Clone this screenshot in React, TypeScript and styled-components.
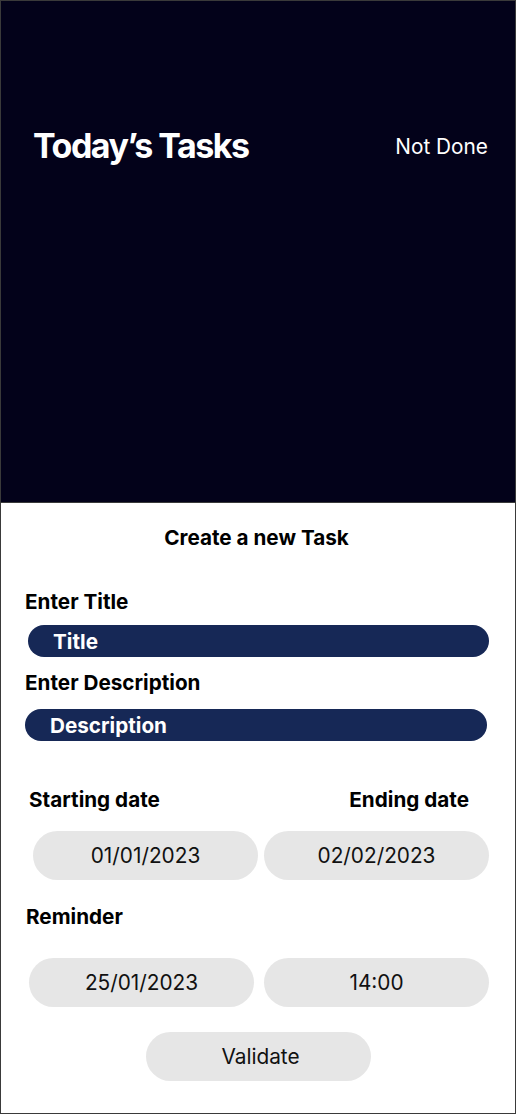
import React from "react";
import styled, { createGlobalStyle } from "styled-components";

const GlobalStyle = createGlobalStyle`
  html, body { margin: 0; padding: 0; background: #ffffff; }
  body { font-family: Inter, "Noto Sans", sans-serif; }
  * { box-sizing: border-box; }
`;

const Frame = styled.div`
  width: 516px;
  height: 1114px;
  border: 1px solid #3a3a3a;
  display: flex;
  flex-direction: column;
  overflow: hidden;
`;

const Header = styled.header`
  height: 501px;
  background: #03021a;
  display: flex;
  justify-content: space-between;
  align-items: flex-start;
  padding: 125px 27px 0 32px;
  flex-shrink: 0;
`;

const HeaderTitle = styled.h1`
  margin: 0;
  color: #ffffff;
  font-family: Inter, sans-serif;
  font-weight: 700;
  font-size: 34px;
  letter-spacing: -1.5px;
  line-height: 40px;
`;

const Status = styled.span`
  color: #ffffff;
  font-family: Inter, sans-serif;
  font-weight: 400;
  font-size: 20.8px;
  line-height: 40px;
  padding-top: 1px;
`;

const Panel = styled.section`
  flex: 1;
  background: #ffffff;
  border-top: 1px solid #3a3a3a;
  display: flex;
  flex-direction: column;
  padding: 21px 26px 0 23px;
`;

const PanelTitle = styled.h2`
  margin: 0 0 37px;
  text-align: center;
  font-family: Inter, sans-serif;
  font-weight: 700;
  font-size: 20.7px;
  line-height: 28px;
  color: #000;
`;

const Label = styled.div<{ $indent?: number }>`
  font-family: Inter, sans-serif;
  font-weight: 700;
  font-size: 20.7px;
  line-height: 26px;
  color: #000;
  padding-left: ${(p) => p.$indent ?? 1}px;
`;

const DarkInput = styled.div<{ $left: number; $right: number; $textLeft: number }>`
  height: 32px;
  border-radius: 16px;
  background: #162856;
  color: #ffffff;
  font-family: Inter, sans-serif;
  font-weight: 700;
  font-size: 20.7px;
  display: flex;
  align-items: center;
  margin-left: ${(p) => p.$left}px;
  margin-right: ${(p) => p.$right}px;
  padding-left: ${(p) => p.$textLeft}px;
`;

const Gap = styled.div<{ $h: number }>`
  height: ${(p) => p.$h}px;
  flex-shrink: 0;
`;

const DateLabels = styled.div`
  display: flex;
  justify-content: space-between;
  padding: 0 20px 0 5px;
  margin-top: 46px;
`;

const PillRow = styled.div<{ $left: number; $top: number }>`
  display: grid;
  grid-template-columns: 225px 225px;
  column-gap: ${(p) => 264 - p.$left - 225}px;
  padding-left: ${(p) => p.$left - 24}px;
  margin-top: ${(p) => p.$top}px;
`;

const Pill = styled.div`
  height: 49px;
  border-radius: 25px;
  background: #e6e6e6;
  display: flex;
  align-items: center;
  justify-content: center;
  font-family: Inter, sans-serif;
  font-weight: 400;
  font-size: 20.8px;
  color: #111;
`;

const ReminderLabel = styled(Label)`
  margin-top: 24px;
`;

const ButtonRow = styled.div`
  display: flex;
  justify-content: center;
  margin-top: 25px;
  padding-left: 4px;
`;

const ValidateButton = styled.button`
  width: 225px;
  height: 49px;
  border: none;
  border-radius: 25px;
  background: #e6e6e6;
  font-family: Inter, sans-serif;
  font-weight: 400;
  font-size: 20.8px;
  color: #111;
  padding: 0 0 0 4px;
  cursor: pointer;
`;

export default function App() {
  return (
    <>
      <GlobalStyle />
      <Frame>
        <Header>
          <HeaderTitle>Today’s Tasks</HeaderTitle>
          <Status>Not Done</Status>
        </Header>
        <Panel>
          <PanelTitle>Create a new Task</PanelTitle>
          <Label>Enter Title</Label>
          <Gap $h={10} />
          <DarkInput $left={4} $right={0} $textLeft={25}>Title</DarkInput>
          <Gap $h={13} />
          <Label>Enter Description</Label>
          <Gap $h={13} />
          <DarkInput $left={1} $right={2} $textLeft={25}>Description</DarkInput>
          <DateLabels>
            <Label $indent={0}>Starting date</Label>
            <Label $indent={0}>Ending date</Label>
          </DateLabels>
          <PillRow $left={33} $top={18}>
            <Pill>01/01/2023</Pill>
            <Pill>02/02/2023</Pill>
          </PillRow>
          <ReminderLabel $indent={2}>Reminder</ReminderLabel>
          <PillRow $left={29} $top={28}>
            <Pill>25/01/2023</Pill>
            <Pill>14:00</Pill>
          </PillRow>
          <ButtonRow>
            <ValidateButton>Validate</ValidateButton>
          </ButtonRow>
        </Panel>
      </Frame>
    </>
  );
}
